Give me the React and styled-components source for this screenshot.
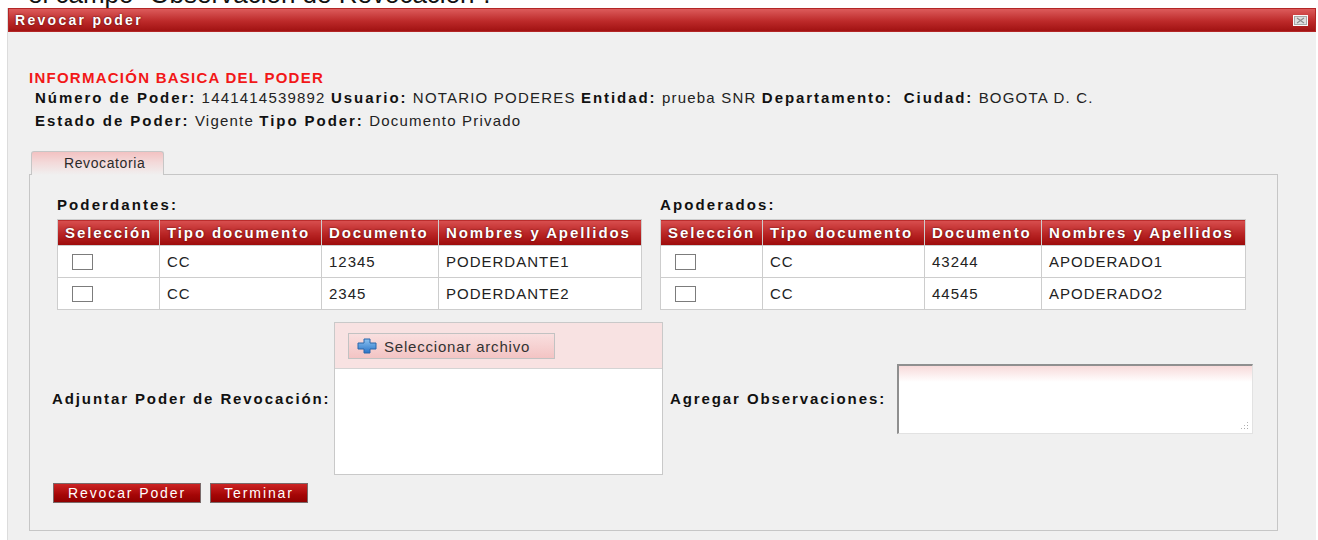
import React from 'react';
import styled, { createGlobalStyle } from 'styled-components';

const GlobalStyle = createGlobalStyle`
  html, body {
    margin: 0;
    padding: 0;
    background: #fff;
  }
  body {
    font-family: "Liberation Sans", Arial, sans-serif;
    overflow: hidden;
  }
`;

const Page = styled.div`
  width: 1318px;
  height: 540px;
  overflow: hidden;
  padding-left: 7px;
  box-sizing: border-box;
`;

const Caption = styled.div`
  height: 8px;
  overflow: hidden;
  padding-left: 21px;
  white-space: nowrap;
`;

const CaptionText = styled.p`
  margin: -19px 0 0;
  font-size: 26px;
  line-height: 26px;
  color: #111;
`;

const Dialog = styled.div`
  width: 1309px;
  background: #f0f0f0;
  border-left: 1px solid #dcdcdc;
  box-sizing: border-box;
`;

const TitleBar = styled.div`
  height: 24px;
  box-sizing: border-box;
  display: flex;
  align-items: center;
  justify-content: space-between;
  padding: 0 7px 0 6px;
  background: linear-gradient(#dc5b5b, #bd2a2a 55%, #a11212);
  border: 1px solid #b32626;
`;

const Title = styled.span`
  color: #fff;
  font-weight: bold;
  font-size: 14px;
  letter-spacing: 2.3px;
  text-shadow: 0 0 2px rgba(60, 0, 0, 0.9);
`;

const CloseBox = styled.span`
  display: block;
  width: 15px;
  height: 11px;
  line-height: 0;
`;

const Body = styled.div`
  padding: 38px 0 40px 21px;
`;

const Heading = styled.div`
  color: #f21818;
  font-weight: bold;
  font-size: 15px;
  letter-spacing: 1.25px;
  line-height: 16px;
`;

const InfoLine = styled.div`
  padding-left: 6px;
  font-size: 15px;
  line-height: 23px;
  letter-spacing: 1.2px;
  color: #222;
  white-space: nowrap;

  b {
    color: #111;
    letter-spacing: 1.95px;
  }
`;

const TabBar = styled.div`
  margin-top: 19px;
  padding-left: 2px;
  display: flex;
`;

const Tab = styled.div`
  position: relative;
  z-index: 1;
  width: 133px;
  height: 24px;
  box-sizing: border-box;
  margin-bottom: -1px;
  padding-left: 32px;
  border: 1px solid #c6c6c6;
  border-bottom: none;
  border-radius: 3px 3px 0 0;
  background: linear-gradient(#f3c2c2, #f3d9d9 45%, #f0f0f0);
  font-size: 14px;
  letter-spacing: 0.6px;
  line-height: 23px;
  color: #2a2a2a;
`;

const Panel = styled.div`
  width: 1249px;
  height: 357px;
  box-sizing: border-box;
  border: 1px solid #c6c6c6;
  padding: 21px 0 0 22px;
`;

const TablesRow = styled.div`
  display: flex;
  gap: 18px;
  padding-left: 5px;
`;

const Group = styled.div`
  display: flex;
  flex-direction: column;
`;

const GroupLabel = styled.div`
  font-weight: bold;
  font-size: 15px;
  letter-spacing: 2.1px;
  line-height: 18px;
  color: #111;
  margin-bottom: 5px;
`;

const Grid = styled.table`
  border-collapse: collapse;
  table-layout: fixed;
  width: ${p => p.$width}px;
  background: #fff;

  th, td {
    border: 1px solid #cdcdcd;
    padding: 0 7px;
    text-align: left;
    white-space: nowrap;
    overflow: hidden;
  }

  th {
    height: 25px;
    background: linear-gradient(#d94f4f, #b82424 55%, #9c0a0a);
    color: #fff;
    font-size: 15px;
    font-weight: bold;
    letter-spacing: 1.9px;
    text-shadow: 0 0 2px rgba(70, 0, 0, 0.9);
  }

  td {
    height: 31px;
    font-size: 15px;
    letter-spacing: 1px;
    color: #222;
  }
`;

const CheckCell = styled.td`
  && {
    padding-left: 14px;
  }
`;

const Check = styled.input.attrs({ type: 'checkbox' })`
  appearance: none;
  display: block;
  margin: 0;
  width: 21px;
  height: 16px;
  border: 1px solid #7c7c7c;
  background: #fff;
`;

const FormRow = styled.div`
  margin-top: 12px;
  display: grid;
  grid-template-columns: 282px 329px 234px 357px;
  align-items: center;
`;

const FieldLabel = styled.label`
  font-weight: bold;
  font-size: 15px;
  letter-spacing: 1.9px;
  color: #111;
  white-space: nowrap;
  padding-left: ${p => p.$indent || 0}px;
`;

const UploadBox = styled.div`
  height: 153px;
  box-sizing: border-box;
  border: 1px solid #c9c9c9;
  background: #fff;
`;

const UploadHead = styled.div`
  height: 46px;
  box-sizing: border-box;
  padding: 10px 0 0 13px;
  background: #f8e2e2;
  border-bottom: 1px solid #d4d4d4;
`;

const PickButton = styled.button`
  display: flex;
  align-items: center;
  gap: 7px;
  width: 207px;
  height: 26px;
  padding: 0 0 0 8px;
  border: 1px solid #c2c2c2;
  background: linear-gradient(#f9dfdf, #f3c4c4);
  font-family: inherit;
  font-size: 15px;
  letter-spacing: 0.8px;
  color: #333;
`;

const NoteWrap = styled.div`
  position: relative;
  width: 356px;
  height: 70px;
`;

const Notes = styled.textarea`
  display: block;
  width: 100%;
  height: 100%;
  box-sizing: border-box;
  margin: 0;
  resize: none;
  border-style: solid;
  border-width: 2px 1px 1px 2px;
  border-color: #8f8f8f #e2e2e2 #e2e2e2 #8f8f8f;
  background: linear-gradient(#f7dada, #fff 16px);
`;

const Grip = styled.span`
  position: absolute;
  right: 4px;
  bottom: 4px;
  width: 9px;
  height: 9px;
  background:
    radial-gradient(circle, #aaa 0.8px, transparent 1px) 0 0 / 3px 3px;
  clip-path: polygon(100% 0, 100% 100%, 0 100%);
`;

const Actions = styled.div`
  margin-top: 8px;
  margin-left: 1px;
  display: flex;
  gap: 9px;
`;

const RedButton = styled.button`
  width: ${p => p.$width}px;
  height: 20px;
  padding: 0;
  border: 1px solid #7a6a6a;
  background: linear-gradient(#cc2424, #a50606 60%, #900000);
  color: #fff;
  font-family: inherit;
  font-size: 14px;
  letter-spacing: 1.9px;
  line-height: 18px;
  text-align: center;
`;

const CloseIcon = () => (
  <CloseBox>
    <svg width="15" height="11" viewBox="0 0 15 11">
      <rect x="0.5" y="0.5" width="14" height="10" fill="#e9e9e9" stroke="#fafafa" />
      <rect x="1.5" y="1.5" width="12" height="8" fill="#dedede" stroke="#a8a8a8" />
      <path d="M4 3l7 5M11 3l-7 5" stroke="#8a8a8a" strokeWidth="1.1" />
    </svg>
  </CloseBox>
);

const PlusIcon = () => (
  <svg width="20" height="16" viewBox="0 0 20 16">
    <defs>
      <linearGradient id="plusFill" x1="0" y1="0" x2="0" y2="1">
        <stop offset="0" stopColor="#8cc2f0" />
        <stop offset="1" stopColor="#2a74c8" />
      </linearGradient>
    </defs>
    <path
      d="M7 1h6v4h6v6h-6v4H7v-4H1V5h6z"
      fill="url(#plusFill)"
      stroke="#2b66aa"
      strokeWidth="1"
    />
  </svg>
);

const poderdantes = [
  { tipo: 'CC', doc: '12345', nombre: 'PODERDANTE1' },
  { tipo: 'CC', doc: '2345', nombre: 'PODERDANTE2' },
];

const apoderados = [
  { tipo: 'CC', doc: '43244', nombre: 'APODERADO1' },
  { tipo: 'CC', doc: '44545', nombre: 'APODERADO2' },
];

const PeopleTable = ({ label, rows, width, cols }) => (
  <Group>
    <GroupLabel>{label}</GroupLabel>
    <Grid $width={width}>
      <colgroup>
        {cols.map((w, i) => <col key={i} style={{ width: w }} />)}
      </colgroup>
      <thead>
        <tr>
          <th>Selección</th>
          <th>Tipo documento</th>
          <th>Documento</th>
          <th>Nombres y Apellidos</th>
        </tr>
      </thead>
      <tbody>
        {rows.map(r => (
          <tr key={r.doc}>
            <CheckCell><Check /></CheckCell>
            <td>{r.tipo}</td>
            <td>{r.doc}</td>
            <td>{r.nombre}</td>
          </tr>
        ))}
      </tbody>
    </Grid>
  </Group>
);

export default function App() {
  return (
    <>
      <GlobalStyle />
      <Page>
        <Caption>
          <CaptionText>el campo “Observación de Revocación”.</CaptionText>
        </Caption>
        <Dialog>
          <TitleBar>
            <Title>Revocar poder</Title>
            <CloseIcon />
          </TitleBar>
          <Body>
            <Heading>INFORMACIÓN BASICA DEL PODER</Heading>
            <InfoLine>
              <b>Número de Poder:</b> 1441414539892 <b>Usuario:</b> NOTARIO PODERES{' '}
              <b>Entidad:</b> prueba SNR <b>Departamento:</b>&nbsp; <b>Ciudad:</b> BOGOTA D. C.
            </InfoLine>
            <InfoLine>
              <b>Estado de Poder:</b> Vigente <b>Tipo Poder:</b> Documento Privado
            </InfoLine>

            <TabBar>
              <Tab>Revocatoria</Tab>
            </TabBar>
            <Panel>
              <TablesRow>
                <PeopleTable
                  label="Poderdantes:"
                  rows={poderdantes}
                  width={584}
                  cols={[102, 162, 117, 203]}
                />
                <PeopleTable
                  label="Apoderados:"
                  rows={apoderados}
                  width={585}
                  cols={[102, 162, 117, 204]}
                />
              </TablesRow>

              <FormRow>
                <FieldLabel>Adjuntar Poder de Revocación:</FieldLabel>
                <UploadBox>
                  <UploadHead>
                    <PickButton>
                      <PlusIcon />
                      Seleccionar archivo
                    </PickButton>
                  </UploadHead>
                </UploadBox>
                <FieldLabel $indent={7}>Agregar Observaciones:</FieldLabel>
                <NoteWrap>
                  <Notes />
                  <Grip />
                </NoteWrap>
              </FormRow>

              <Actions>
                <RedButton $width={148}>Revocar Poder</RedButton>
                <RedButton $width={98}>Terminar</RedButton>
              </Actions>
            </Panel>
          </Body>
        </Dialog>
      </Page>
    </>
  );
}
